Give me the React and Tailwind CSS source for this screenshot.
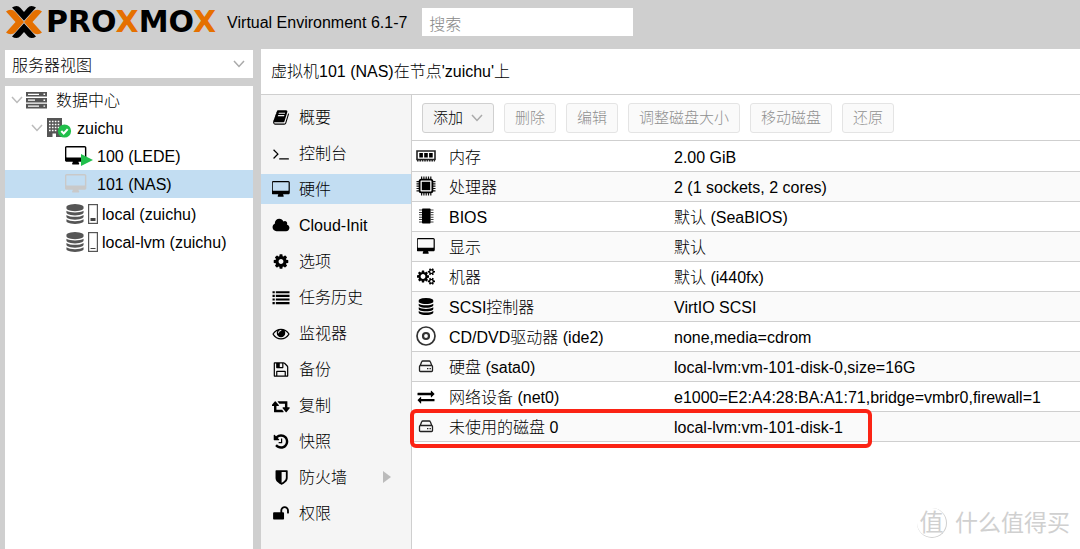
import { useState } from 'react';

const FA = {
  book: { w: 1792, d: 'M1703 478q40 57 18 129l-275 906q-19 64-76.5 107.5t-122.5 43.5h-923q-77 0-148.5-53.5t-99.5-131.5q-24-67-2-127 0-4 3-27t4-37q1-8-3-21.5t-3-19.5q2-11 8-21t16.5-23.5 16.5-23.5q23-38 45-91.5t30-91.5q3-10 .5-30t-.5-28q3-11 17-28t17-23q21-36 42-92t25-90q1-9-2.5-32t.5-28q4-13 22-30.5t22-22.5q19-26 42.5-84.5t27.5-96.5q1-8-3-25.5t-2-26.5q2-8 9-18t18-23 17-21q8-12 16.5-30.5t15-35 16-36 19.5-32 26.5-23.5 36-11.5 47.5 5.5l-1 3q38-9 51-9h761q74 0 114 56t18 130l-274 906q-36 119-71.5 153.5t-128.5 34.5h-869q-27 0-38 15-11 16-1 43 24 70 144 70h923q29 0 56-15.5t35-41.5l300-987q7-22 5-57 38 15 59 43zm-1064 2q-4 13 2 22.5t20 9.5h608q13 0 25.5-9.5t16.5-22.5l21-64q4-13-2-22.5t-20-9.5h-608q-13 0-25.5 9.5t-16.5 22.5zm-83 256q-4 13 2 22.5t20 9.5h608q13 0 25.5-9.5t16.5-22.5l21-64q4-13-2-22.5t-20-9.5h-608q-13 0-25.5 9.5t-16.5 22.5z' },
  terminal: { w: 1792, d: 'M649 983l-466 466q-10 10-23 10t-23-10l-50-50q-10-10-10-23t10-23l393-393-393-393q-10-10-10-23t10-23l50-50q10-10 23-10t23 10l466 466q10 10 10 23t-10 23zm1079 457v64q0 14-9 23t-23 9h-960q-14 0-23-9t-9-23v-64q0-14 9-23t23-9h960q14 0 23 9t9 23z' },
  desktop: { w: 1856, d: 'M1728 992v-832q0-13-9.5-22.5t-22.5-9.5h-1600q-13 0-22.5 9.5t-9.5 22.5v832q0 13 9.5 22.5t22.5 9.5h1600q13 0 22.5-9.5t9.5-22.5zm128-832v1088q0 66-47 113t-113 47h-544q0 37 16 77.5t32 71 16 43.5q0 26-19 45t-45 19h-512q-26 0-45-19t-19-45q0-14 16-44t32-70 16-78h-544q-66 0-113-47t-47-113v-1088q0-66 47-113t113-47h1600q66 0 113 47t47 113z' },
  cloud: { w: 2048, d: 'M1984 1152q0 159-112.5 271.5t-271.5 112.5h-1088q-185 0-316.5-131.5t-131.5-316.5q0-132 71-241.5t187-163.5q-2-28-2-43 0-212 150-362t362-150q158 0 286.5 88t187.5 230q70-62 166-62 106 0 181 75t75 181q0 75-41 138 129 30 213 134.5t84 239.5z' },
  cog: { w: 1792, d: 'M1152 896q0-106-75-181t-181-75-181 75-75 181 75 181 181 75 181-75 75-181zm512-109v222q0 12-8 23t-20 13l-185 28q-19 54-39 91 35 50 107 138 10 12 10 25t-9 23q-27 37-99 108t-94 71q-12 0-26-9l-138-108q-44 23-91 38-16 136-29 186-7 28-36 28h-222q-14 0-24.5-8.5t-11.5-21.5l-28-184q-49-16-90-37l-141 107q-10 9-25 9-14 0-25-11-126-114-165-168-7-10-7-23 0-12 8-23 15-21 51-66.5t54-70.5q-27-50-41-99l-183-27q-13-2-21-12.5t-8-23.5v-222q0-12 8-23t19-13l186-28q14-46 39-92-40-57-107-138-10-12-10-24 0-10 9-23 26-36 98.5-107.5t94.5-71.5q13 0 26 10l138 107q44-23 91-38 16-136 29-186 7-28 36-28h222q14 0 24.5 8.5t11.5 21.5l28 184q49 16 90 37l142-107q9-9 24-9 13 0 25 10 129 119 165 170 7 8 7 22 0 12-8 23-15 21-51 66.5t-54 70.5q26 50 41 98l183 28q13 2 21 12.5t8 23.5z' },
  list: { w: 1792, d: 'M0 224h240v224h-240zM0 608h240v224h-240zM0 992h240v224h-240zM0 1376h240v224h-240zM352 224h1440v224h-1440zM352 608h1440v224h-1440zM352 992h1440v224h-1440zM352 1376h1440v224h-1440z' },
  eye: { w: 1792, d: 'M1664 960q-152-236-381-353 61 104 61 225 0 185-131.5 316.5t-316.5 131.5-316.5-131.5-131.5-316.5q0-121 61-225-229 117-381 353 133 205 333.5 326.5t434.5 121.5 434.5-121.5 333.5-326.5zm-720-384q0-20-14-34t-34-14q-125 0-214.5 89.5t-89.5 214.5q0 20 14 34t34 14 34-14 14-34q0-86 61-147t147-61q20 0 34-14t14-34zm848 384q0 34-20 69-140 230-376.5 368.5t-499.5 138.5-499.5-139-376.5-368q-20-35-20-69t20-69q140-229 376.5-368t499.5-139 499.5 139 376.5 368q20 35 20 69z' },
  floppy: { w: 1792, d: 'M512 1536h768v-384h-768v384zm896 0h128v-896q0-14-10-38.5t-20-34.5l-281-281q-10-10-34-20t-39-10v416q0 40-28 68t-68 28h-576q-40 0-68-28t-28-68v-416h-128v1280h128v-416q0-40 28-68t68-28h832q40 0 68 28t28 68v416zm-384-928v-320q0-13-9.5-22.5t-22.5-9.5h-192q-13 0-22.5 9.5t-9.5 22.5v320q0 13 9.5 22.5t22.5 9.5h192q13 0 22.5-9.5t9.5-22.5zm640 32v928q0 40-28 68t-68 28h-1344q-40 0-68-28t-28-68v-1344q0-40 28-68t68-28h928q40 0 88 20t76 48l280 280q28 28 48 76t20 88z' },
  retweet: { w: 1856, d: 'M1216 1568q0 13-9.5 22.5t-22.5 9.5h-960q-8 0-13.5-2t-9-7-5.5-8-3-11.5-1-11.5v-600h-192q-26 0-45-19t-19-45q0-24 15-41l320-384q19-22 49-22t49 22l320 384q15 17 15 41 0 26-19 45t-45 19h-192v384h576q16 0 25 11l160 192q7 10 7 21zm640-416q0 24-15 41l-320 384q-20 23-49 23t-49-23l-320-384q-15-17-15-41 0-26 19-45t45-19h192v-384h-576q-16 0-25-12l-160-192q-7-9-7-20 0-13 9.5-22.5t22.5-9.5h960q8 0 13.5 2t9 7 5.5 8 3 11.5 1 11.5v600h192q26 0 45 19t19 45z' },
  history: { w: 1792, d: 'M1664 896q0 156-61 298t-164 245-245 164-298 61q-172 0-327-72.5t-264-204.5q-7-10-6.5-22.5t8.5-20.5l137-138q10-9 25-9 16 2 23 12 73 95 179 147t225 52q104 0 198.5-40.5t163.5-109.5 109.5-163.5 40.5-198.5-40.5-198.5-109.5-163.5-163.5-109.5-198.5-40.5q-98 0-188 35.5t-160 101.5l137 138q31 30 14 69-17 40-59 40h-448q-26 0-45-19t-19-45v-448q0-42 40-59 39-17 69 14l130 129q107-101 244.5-156.5t284.5-55.5q156 0 298 61t245 164 164 245 61 298zm-640-288v448q0 14-9 23t-23 9h-320q-14 0-23-9t-9-23v-64q0-14 9-23t23-9h224v-352q0-14 9-23t23-9h64q14 0 23 9t9 23z' },
  shield: { w: 1792, d: 'M1408 960v-640h-448v1137q119-63 213-137 235-184 235-360zm192-768v768q0 86-33.5 170.5t-83 150-118 127.5-126.5 103-121 77.5-89.5 49.5-42.5 20q-12 6-26 6t-26-6q-16-7-42.5-20t-89.5-49.5-121-77.5-126.5-103-118-127.5-83-150-33.5-170.5v-768q0-26 19-45t45-19h1152q26 0 45 19t19 45z' },
  unlock: { w: 1792, d: 'M1728 576v256q0 26-19 45t-45 19h-64q-26 0-45-19t-19-45v-256q0-106-75-181t-181-75-181 75-75 181v192h96q40 0 68 28t28 68v576q0 40-28 68t-68 28h-960q-40 0-68-28t-28-68v-576q0-40 28-68t68-28h672v-192q0-185 131.5-316.5t316.5-131.5 316.5 131.5 131.5 316.5z' },
  cogs: { w: 1920, d: 'M896 896q0-106-75-181t-181-75-181 75-75 181 75 181 181 75 181-75 75-181zm768 512q0-52-38-90t-90-38-90 38-38 90q0 53 37.5 90.5t90.5 37.5 90.5-37.5 37.5-90.5zm0-1024q0-52-38-90t-90-38-90 38-38 90q0 53 37.5 90.5t90.5 37.5 90.5-37.5 37.5-90.5zm-384 421v185q0 10-7 19.5t-16 10.5l-155 24q-11 35-32 76 34 48 90 115 7 11 7 20 0 12-7 19-23 30-82.5 89.5t-78.5 59.5q-11 0-21-7l-115-90q-37 19-77 31-11 108-23 155-7 24-30 24h-186q-11 0-20-7.5t-10-17.5l-23-153q-34-10-75-31l-118 89q-7 7-20 7-11 0-21-8-144-133-144-160 0-9 7-19 10-14 41-53t47-61q-23-44-35-82l-152-24q-10-1-17-9.5t-7-19.5v-185q0-10 7-19.5t16-10.5l155-24q11-35 32-76-34-48-90-115-7-11-7-20 0-12 7-20 22-30 82-89t79-59q11 0 21 7l115 90q34-18 77-32 11-108 23-154 7-24 30-24h186q11 0 20 7.5t10 17.5l23 153q34 10 75 31l118-89q8-7 20-7 11 0 21 8 144 133 144 160 0 8-7 19-12 16-42 54t-45 60q23 48 34 82l152 23q10 2 17 10.5t7 19.5zm640 533v140q0 16-149 31-12 27-30 52 51 113 51 138 0 4-4 7-122 71-124 71-8 0-46-47t-52-68q-20 2-30 2t-30-2q-14 21-52 68t-46 47q-2 0-124-71-4-3-4-7 0-25 51-138-18-25-30-52-149-15-149-31v-140q0-16 149-31 13-29 30-52-51-113-51-138 0-4 4-7 4-2 35-20t59-34 30-16q8 0 46 46.5t52 67.5q20-2 30-2t30 2q51-71 92-112l6-2q4 0 124 70 4 3 4 7 0 25-51 138 17 23 30 52 149 15 149 31zm0-1024v140q0 16-149 31-12 27-30 52 51 113 51 138 0 4-4 7-122 71-124 71-8 0-46-47t-52-68q-20 2-30 2t-30-2q-14 21-52 68t-46 47q-2 0-124-71-4-3-4-7 0-25 51-138-18-25-30-52-149-15-149-31v-140q0-16 149-31 13-29 30-52-51-113-51-138 0-4 4-7 4-2 35-20t59-34 30-16q8 0 46 46.5t52 67.5q20-2 30-2t30 2q51-71 92-112l6-2q4 0 124 70 4 3 4 7 0 25-51 138 17 23 30 52 149 15 149 31z' },
  database: { w: 1792, d: 'M896 768q237 0 443-43t325-127v170q0 69-103 128t-280 93.5-385 34.5-385-34.5-280-93.5-103-128v-170q119 84 325 127t443 43zm0 768q237 0 443-43t325-127v170q0 69-103 128t-280 93.5-385 34.5-385-34.5-280-93.5-103-128v-170q119 84 325 127t443 43zm0-384q237 0 443-43t325-127v170q0 69-103 128t-280 93.5-385 34.5-385-34.5-280-93.5-103-128v-170q119 84 325 127t443 43zm0-1152q208 0 385 34.5t280 93.5 103 128v128q0 69-103 128t-280 93.5-385 34.5-385-34.5-280-93.5-103-128v-128q0-69 103-128t280-93.5 385-34.5z' },
  exchange: { w: 1792, d: 'M1792 1184v192q0 13-9.5 22.5t-22.5 9.5h-1376v192q0 13-9.5 22.5t-22.5 9.5q-12 0-24-10l-319-320q-9-9-9-22 0-14 9-23l320-320q9-9 23-9 13 0 22.5 9.5t9.5 22.5v192h1376q13 0 22.5 9.5t9.5 22.5zm0-544q0 14-9 23l-320 320q-9 9-23 9-13 0-22.5-9.5t-9.5-22.5v-192h-1376q-13 0-22.5-9.5t-9.5-22.5v-192q0-13 9.5-22.5t22.5-9.5h1376v-192q0-14 9-23t23-9q12 0 24 10l319 319q9 9 9 23z' },
};

const Icon = ({ name, className = 'h-[17px] w-[18px]' }) => (
  <svg className={`shrink-0 ${className}`} viewBox={`0 0 ${FA[name].w} 1792`} fill="currentColor" aria-hidden="true">
    <path d={FA[name].d} />
  </svg>
);

const MemoryIcon = () => (
  <svg className="h-5 w-5" viewBox="0 0 20 20" aria-hidden="true">
    <path d="M1 5h18v8.5H1z" fill="#fff" stroke="#222" strokeWidth="1.6" />
    <path d="M3.3 7h3.6v4.5H3.3zM8.2 7h3.6v4.5H8.2zM13.1 7h3.6v4.5h-3.6z" fill="#000" />
    <path d="M1 14.6h18" stroke="#222" strokeWidth="2" strokeDasharray="1.6 0.8" />
  </svg>
);

const CpuIcon = () => (
  <svg className="h-5 w-5" viewBox="0 0 20 20" aria-hidden="true">
    <path d="M5 1.8h10.5M5 18.2h10.5M1.8 5v10.5M18.2 5v10.5" stroke="#111" strokeWidth="2.6" strokeDasharray="1.2 1.1" />
    <rect x="3.6" y="3.6" width="12.8" height="12.8" rx="1.6" fill="#fff" stroke="#000" strokeWidth="1.8" />
    <rect x="5.8" y="5.8" width="8.4" height="8.4" fill="#000" />
  </svg>
);

const BiosIcon = () => (
  <svg className="h-5 w-5" viewBox="0 0 20 20" aria-hidden="true">
    <path d="M4.5 3.5v13M16 3.5v13" stroke="#444" strokeWidth="3" strokeDasharray="1 1.4" />
    <rect x="6" y="2.5" width="8.6" height="15" rx="0.8" fill="#000" />
  </svg>
);

const CdIcon = () => (
  <svg className="h-5 w-5" viewBox="0 0 20 20" fill="none" stroke="#333" aria-hidden="true">
    <circle cx="10" cy="10" r="9" strokeWidth="1.7" />
    <circle cx="10" cy="10" r="3" strokeWidth="2.2" />
  </svg>
);

const DiskIcon = () => (
  <svg className="h-5 w-5" viewBox="0 0 20 20" fill="none" stroke="#222" strokeWidth="1.3" aria-hidden="true">
    <path d="M3.5 10.5v4q0 1 1 1h11q1 0 1-1v-4q0-1-1-1h-11q-1 0-1 1zM4 10l1.7-4.2q.3-.8 1.2-.8h6.2q.9 0 1.2.8L16 10" />
    <path d="M11 12.6h1.4M13.5 12.6h1.4" />
  </svg>
);

const ServerIcon = () => (
  <svg className="h-[18px] w-[21px]" viewBox="0 0 21 18" aria-hidden="true">
    <path d="M0 1h21v4.6H0zM0 6.9h21v4.6H0zM0 12.8h21v4.6H0z" fill="#555" />
    <path d="M2 3.3h11M2 9.2h7M2 15.1h11" stroke="#fff" strokeWidth="1.2" />
    <path d="M17.5 3.3h1.6M17.5 9.2h1.6M17.5 15.1h1.6" stroke="#fff" strokeWidth="1.4" />
  </svg>
);

const NodeIcon = () => (
  <svg className="h-[22px] w-[26px]" viewBox="0 0 26 22" aria-hidden="true">
    <path d="M1 1h15v19H1z" fill="#555" />
    <path d="M3 4.5h11M3 7.5h11M3 10.5h11M3 13.5h8" stroke="#fff" strokeWidth="1.6" strokeDasharray="1.6 1.3" />
    <path d="M6.5 16.5h3.5V20H6.5z" fill="#fff" />
    <circle cx="18.5" cy="14" r="6.6" fill="#21bf4b" />
    <path d="M15.3 14l2.4 2.5 4-4.4" fill="none" stroke="#fff" strokeWidth="2" />
  </svg>
);

const StorageIcon = ({ used }) => (
  <span className="flex items-center gap-[3px] text-[#555]">
    <Icon name="database" className="h-5 w-5" />
    <svg className="h-5 w-[10px]" viewBox="0 0 10 20" aria-hidden="true">
      <rect x="0.6" y="0.6" width="8.8" height="18.8" fill="#fff" stroke="#555" strokeWidth="1.2" />
      <rect x="2.5" y={used ? 14 : 16} width="5" height={used ? 3 : 1} fill="#444" />
    </svg>
  </span>
);

const Chevron = ({ className }) => (
  <svg className={className} viewBox="0 0 12 8" fill="none" stroke="currentColor" aria-hidden="true">
    <path d="M1 1l5 5.5L11 1" strokeWidth="1.5" />
  </svg>
);

const menu = [
  { icon: 'book', label: '概要' },
  { icon: 'terminal', label: '控制台' },
  { icon: 'desktop', label: '硬件' },
  { icon: 'cloud', label: 'Cloud-Init' },
  { icon: 'cog', label: '选项' },
  { icon: 'list', label: '任务历史' },
  { icon: 'eye', label: '监视器' },
  { icon: 'floppy', label: '备份' },
  { icon: 'retweet', label: '复制' },
  { icon: 'history', label: '快照' },
  { icon: 'shield', label: '防火墙', more: true },
  { icon: 'unlock', label: '权限' },
];

const hardware = [
  { icon: <MemoryIcon />, name: '内存', value: '2.00 GiB' },
  { icon: <CpuIcon />, name: '处理器', value: '2 (1 sockets, 2 cores)' },
  { icon: <BiosIcon />, name: 'BIOS', value: '默认 (SeaBIOS)' },
  { icon: <Icon name="desktop" />, name: '显示', value: '默认' },
  { icon: <Icon name="cogs" />, name: '机器', value: '默认 (i440fx)' },
  { icon: <Icon name="database" />, name: 'SCSI控制器', value: 'VirtIO SCSI' },
  { icon: <CdIcon />, name: 'CD/DVD驱动器 (ide2)', value: 'none,media=cdrom' },
  { icon: <DiskIcon />, name: '硬盘 (sata0)', value: 'local-lvm:vm-101-disk-0,size=16G' },
  { icon: <Icon name="exchange" />, name: '网络设备 (net0)', value: 'e1000=E2:A4:28:BA:A1:71,bridge=vmbr0,firewall=1' },
  { icon: <DiskIcon />, name: '未使用的磁盘 0', value: 'local-lvm:vm-101-disk-1', marked: true },
];

const actions = ['删除', '编辑', '调整磁盘大小', '移动磁盘', '还原'];

function Logo() {
  return (
    <div className="flex items-center gap-1">
      <svg className="h-8 w-9" viewBox="0 0 36 32" aria-hidden="true">
        <path d="M0 5.5Q2 3.8 4.500 3.800Q7.500 3.800 9.500 6L18 16L9.500 26Q7.500 28.200 4.500 28.200Q2 28.200 0 26.500L9.500 16zM36 5.500Q34 3.800 31.500 3.800Q28.500 3.800 26.500 6L18 16L26.500 26Q28.500 28.200 31.500 28.200Q34 28.200 36 26.500L26.500 16z" fill="#e57000" />
        <path d="M6 1.500Q8 0 10.500 0Q12.800 0 14.500 2L18 6L21.500 2Q23.200 0 25.500 0Q28 0 30 1.500L18 14.800zM6 30.500Q8 32 10.500 32Q12.800 32 14.500 30L18 26L21.500 30Q23.200 32 25.500 32Q28 32 30 30.500L18 17.200z" fill="#000" />
      </svg>
      <span className="font-['DejaVu_Sans'] text-[30px] leading-8 font-bold">
        PRO<span className="text-[#e57000]">X</span>MO<span className="text-[#e57000]">X</span>
      </span>
    </div>
  );
}

function Header() {
  const [query, setQuery] = useState('');
  return (
    <header className="flex h-[49px] items-start pl-1.5">
      <div className="pt-1.5">
        <Logo />
      </div>
      <span className="pt-[11px] pl-[11px]">Virtual Environment 6.1-7</span>
      <input
        type="text"
        aria-label="搜索"
        placeholder="搜索"
        value={query}
        onChange={(e) => setQuery(e.target.value)}
        className="mt-2 ml-[15px] h-7 w-[211px] bg-white px-[7px] pt-1.5 outline-none placeholder:text-[#888]"
      />
    </header>
  );
}

function TreeRow({ icon, label, indent, open, selected }) {
  return (
    <button className={`flex h-7 w-full items-center text-left ${indent} ${selected ? 'bg-[#c2ddf2]' : ''}`}>
      {open && <Chevron className="h-2 w-3 text-[#bbb]" />}
      {icon}
      <span className="pt-0.5">{label}</span>
    </button>
  );
}

function Tree() {
  return (
    <nav className="flex-1 bg-white">
      <TreeRow indent="pl-1.5 gap-[3px]" open icon={<span className="mr-1.5"><ServerIcon /></span>} label="数据中心" />
      <TreeRow indent="pl-[26px] gap-[3px]" open icon={<span className="mr-0.5"><NodeIcon /></span>} label="zuichu" />
      <TreeRow
        indent="pl-[60px] gap-1"
        label="100 (LEDE)"
        icon={
          <span className="relative w-7">
            <Icon name="desktop" className="h-5 w-[22px]" />
            <svg className="absolute top-2 left-4 h-3 w-3" viewBox="0 0 12 12" aria-hidden="true">
              <path d="M0 0l12 6-12 6z" fill="#21bf4b" />
            </svg>
          </span>
        }
      />
      <TreeRow
        indent="pl-[60px] gap-1"
        label="101 (NAS)"
        selected
        icon={<span className="w-7 text-[#c9c9c9]"><Icon name="desktop" className="h-5 w-[22px]" /></span>}
      />
      <div className="pt-0.5">
        <TreeRow indent="pl-[60px] gap-1" icon={<StorageIcon used />} label="local (zuichu)" />
        <TreeRow indent="pl-[60px] gap-1" icon={<StorageIcon />} label="local-lvm (zuichu)" />
      </div>
    </nav>
  );
}

function SideMenu({ active, onSelect }) {
  return (
    <nav className="flex w-[151px] shrink-0 flex-col gap-1.5 border-r border-[#cfcfcf] bg-[#f5f5f5] pt-[7px]">
      {menu.map((m) => (
        <button
          key={m.label}
          onClick={() => onSelect(m.label)}
          className={`flex h-[30px] items-center pr-5 pl-[11px] text-left ${active === m.label ? 'bg-[#c2ddf2]' : ''}`}
        >
          <Icon name={m.icon} />
          <span className="flex-1 pt-0.5 pl-[9px]">{m.label}</span>
          {m.more && (
            <svg className="h-3 w-2 text-[#bbb]" viewBox="0 0 8 12" fill="currentColor" aria-hidden="true">
              <path d="M0 0l8 6-8 6z" />
            </svg>
          )}
        </button>
      ))}
    </nav>
  );
}

function Toolbar() {
  return (
    <div className="flex h-[46px] items-center gap-2.5 border-b border-[#cfcfcf] pl-2.5 text-[15px]">
      <button className="flex h-[30px] items-center gap-2 rounded-[3px] border border-[#d0d0d0] bg-[#f5f5f5] px-2.5">
        添加
        <Chevron className="h-2 w-3 text-[#aaa]" />
      </button>
      {actions.map((a) => (
        <button key={a} disabled className="h-[30px] rounded-[3px] border border-[#e4e4e4] bg-[#fafafa] px-2.5 text-[#909090]">
          {a}
        </button>
      ))}
    </div>
  );
}

function HardwareTable() {
  return (
    <table className="w-full table-fixed border-collapse">
      <tbody>
        {hardware.map((h) => (
          <tr key={h.name} className="h-[30px] border-b border-[#cfcfcf] even:bg-[#fafafa]">
            <td className="w-[262px] p-0">
              <div className="relative flex items-center">
                <span className="flex w-7 justify-center">{h.icon}</span>
                <span className="pt-1 pl-[9px]">{h.name}</span>
                {h.marked && (
                  <span className="pointer-events-none absolute -top-[3px] -left-[2px] h-[39px] w-[462px] rounded-md border-4 border-[#fb2314]" />
                )}
              </div>
            </td>
            <td className="p-0 pt-1">{h.value}</td>
          </tr>
        ))}
      </tbody>
    </table>
  );
}

export default function App() {
  const [active, setActive] = useState('硬件');

  return (
    <div className="flex min-h-screen flex-col bg-[#cfcfcf] font-['Liberation_Sans','Noto_Sans_CJK_SC',sans-serif] text-base leading-6 font-light text-black">
      <Header />
      <div className="flex flex-1 gap-2">
        <aside className="flex w-[253px] shrink-0 flex-col gap-2 pl-[5px]">
          <div className="relative mt-px h-7 bg-white">
            <select aria-label="服务器视图" className="block w-full appearance-none bg-transparent pt-1 pl-[7px] outline-none">
              <option>服务器视图</option>
            </select>
            <Chevron className="pointer-events-none absolute top-2.5 right-2 h-2 w-3 text-[#aaa]" />
          </div>
          <Tree />
        </aside>
        <main className="relative flex min-w-0 flex-1 flex-col bg-white">
          <h1 className="flex h-[46px] items-center border-b border-[#cfcfcf] pl-2.5">虚拟机101 (NAS)在节点'zuichu'上</h1>
          <div className="flex flex-1">
            <SideMenu active={active} onSelect={setActive} />
            <section className="min-w-0 flex-1">
              <Toolbar />
              <HardwareTable />
            </section>
          </div>
          <div className="absolute right-2.5 bottom-2.5 flex items-center gap-2 font-normal text-[#d0d0d0]">
            <span className="flex h-[30px] w-[30px] items-center justify-center rounded-full border-r border-b border-[#d0d0d0] text-2xl">值</span>
            <span className="text-[23px] leading-8">什么值得买</span>
          </div>
        </main>
      </div>
    </div>
  );
}
